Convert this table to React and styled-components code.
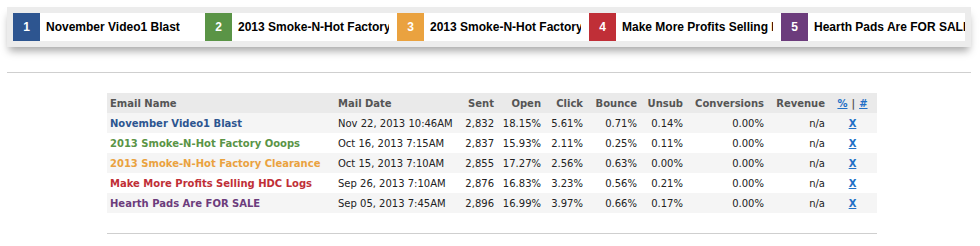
import React from 'react'
import styled, { createGlobalStyle } from 'styled-components'

const GlobalStyle = createGlobalStyle`
  body {
    margin: 0;
    background: #fff;
    font-family: "DejaVu Sans", Verdana, sans-serif;
  }
`

const colors = {
  blue: '#2d5590',
  green: '#5a9446',
  orange: '#eaa23f',
  red: '#c02f37',
  purple: '#6c3c7c',
}

const blasts = [
  { name: 'November Video1 Blast', color: 'blue', date: 'Nov 22, 2013 10:46AM', sent: '2,832', open: '18.15%', click: '5.61%', bounce: '0.71%', unsub: '0.14%' },
  { name: '2013 Smoke-N-Hot Factory Ooops', color: 'green', date: 'Oct 16, 2013 7:15AM', sent: '2,837', open: '15.93%', click: '2.11%', bounce: '0.25%', unsub: '0.11%' },
  { name: '2013 Smoke-N-Hot Factory Clearance', color: 'orange', date: 'Oct 15, 2013 7:10AM', sent: '2,855', open: '17.27%', click: '2.56%', bounce: '0.63%', unsub: '0.00%' },
  { name: 'Make More Profits Selling HDC Logs', color: 'red', date: 'Sep 26, 2013 7:10AM', sent: '2,876', open: '16.83%', click: '3.23%', bounce: '0.56%', unsub: '0.21%' },
  { name: 'Hearth Pads Are FOR SALE', color: 'purple', date: 'Sep 05, 2013 7:45AM', sent: '2,896', open: '16.99%', click: '3.97%', bounce: '0.66%', unsub: '0.17%' },
]

const Legend = styled.div`
  margin: 7px 0 0 7px;
  width: 952px;
  padding: 6px;
  background: #ececec;
  box-shadow: 0 6px 8px -2px rgba(0, 0, 0, 0.35);
`

const Strip = styled.div`
  display: flex;
  gap: 8px;
  background: #fff;
`

const LegendItem = styled.div`
  display: flex;
  align-items: center;
  width: 184px;
  height: 28px;
`

const Num = styled.div`
  flex: none;
  width: 27px;
  height: 28px;
  display: flex;
  align-items: center;
  justify-content: center;
  background: ${p => colors[p.$color]};
  color: #fff;
  font: bold 12px "Liberation Sans", Arial, sans-serif;
`

const LegendName = styled.div`
  padding-left: 6px;
  overflow: hidden;
  white-space: nowrap;
  font: bold 12px "Liberation Sans", Arial, sans-serif;
  color: #000;
`

const Rule = styled.hr`
  margin: ${p => p.$top}px 0 0 ${p => p.$left}px;
  width: ${p => p.$width}px;
  border: 0;
  border-top: 1px solid #cfcfcf;
`

const Table = styled.table`
  margin: 20px 0 0 107px;
  width: 770px;
  table-layout: fixed;
  border-collapse: collapse;
  font-size: 10px;
  color: #222;
`

const Row = styled.tr`
  height: 20px;
  background: ${p => (p.$head ? '#eaeaea' : p.$odd ? '#f5f5f5' : '#fff')};
`

const Th = styled.th`
  padding: 0 3px;
  font-weight: bold;
  color: #555;
  text-align: ${p => p.$align || 'right'};
  white-space: nowrap;
`

const Td = styled.td`
  padding: 0 3px;
  text-align: ${p => p.$align || 'right'};
  white-space: nowrap;
`

const Name = styled.span`
  font-weight: bold;
  color: ${p => colors[p.$color]};
`

const Link = styled.a`
  color: #1f6fc6;
  font-weight: bold;
  text-decoration: underline;
`

const Sep = styled.span`
  color: #555;
  margin: 0 4px;
`

const widths = [228, 123, 39, 47, 42, 54, 46, 81, 61, 49]

export default function App() {
  return (
    <>
      <GlobalStyle />
      <Legend>
        <Strip>
          {blasts.map((b, i) => (
            <LegendItem key={b.name}>
              <Num $color={b.color}>{i + 1}</Num>
              <LegendName>{b.name}</LegendName>
            </LegendItem>
          ))}
        </Strip>
      </Legend>
      <Rule $top={25} $left={7} $width={964} />
      <Table>
        <colgroup>
          {widths.map((w, i) => <col key={i} style={{ width: w }} />)}
        </colgroup>
        <thead>
          <Row $head>
            <Th $align="left">Email Name</Th>
            <Th $align="left">Mail Date</Th>
            <Th>Sent</Th>
            <Th>Open</Th>
            <Th>Click</Th>
            <Th>Bounce</Th>
            <Th>Unsub</Th>
            <Th>Conversions</Th>
            <Th>Revenue</Th>
            <Th $align="center">
              <Link href="#">%</Link><Sep>|</Sep><Link href="#">#</Link>
            </Th>
          </Row>
        </thead>
        <tbody>
          {blasts.map((b, i) => (
            <Row key={b.name} $odd={i % 2 === 0}>
              <Td $align="left"><Name $color={b.color}>{b.name}</Name></Td>
              <Td $align="left">{b.date}</Td>
              <Td>{b.sent}</Td>
              <Td>{b.open}</Td>
              <Td>{b.click}</Td>
              <Td>{b.bounce}</Td>
              <Td>{b.unsub}</Td>
              <Td>0.00%</Td>
              <Td>n/a</Td>
              <Td $align="center"><Link href="#">X</Link></Td>
            </Row>
          ))}
        </tbody>
      </Table>
      <Rule $top={20} $left={107} $width={770} />
    </>
  )
}
